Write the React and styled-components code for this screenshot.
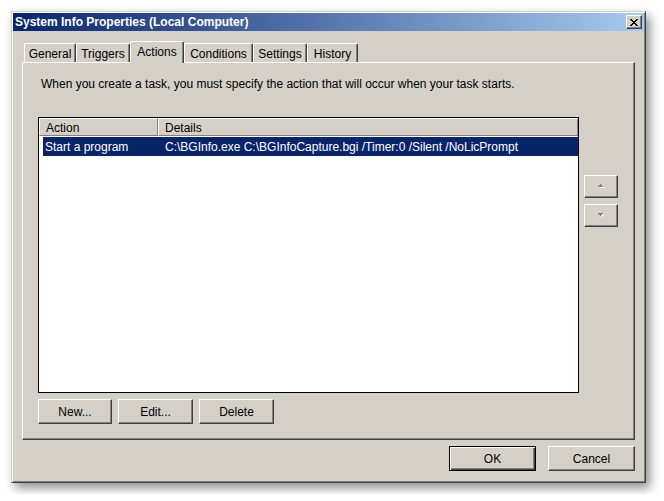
import styled, { createGlobalStyle, css } from "styled-components";

const GlobalStyle = createGlobalStyle`
    html, body {
        margin: 0;
        background: #ffffff;
    }
    body {
        font-family: "Liberation Sans", Arial, sans-serif;
        font-size: 12px;
        color: #000000;
    }
`;

const raised = css`
    border: 1px solid;
    border-color: #ffffff #404040 #404040 #ffffff;
    box-shadow: inset -1px -1px #808080;
`;

const Page = styled.div`
    padding: 11px;
`;

const Window = styled.div`
    width: 635px;
    height: 472px;
    box-sizing: border-box;
    display: flex;
    flex-direction: column;
    padding: 1px;
    background: #d4d0c8;
    border: 1px solid;
    border-color: #d4d0c8 #404040 #404040 #d4d0c8;
    box-shadow: inset 1px 1px #ffffff, inset -1px -1px #808080,
        4px 5px 10px rgba(0, 0, 0, 0.45);
`;

const TitleBar = styled.div`
    height: 18px;
    flex: none;
    display: flex;
    align-items: center;
    justify-content: space-between;
    padding: 0 2px;
    background: linear-gradient(to right, #0a246a, #a6caf0);
    color: #ffffff;
    font-weight: bold;
    font-size: 12px;
`;

const CloseButton = styled.div`
    ${raised};
    width: 16px;
    height: 14px;
    box-sizing: border-box;
    background: #d4d0c8;
    display: flex;
    align-items: center;
    justify-content: center;
`;

const Body = styled.div`
    flex: 1;
    display: flex;
    flex-direction: column;
    padding: 10px 9px 10px 9px;
`;

const TabStrip = styled.div`
    height: 21px;
    flex: none;
    display: flex;
    align-items: flex-start;
    padding-left: 2px;
    position: relative;
    z-index: 1;
`;

const Tab = styled.div`
    box-sizing: border-box;
    width: ${(p) => p.$w}px;
    height: ${(p) => (p.$active ? 22 : 19)}px;
    margin-top: ${(p) => (p.$active ? 0 : 2)}px;
    padding-top: 3px;
    text-align: center;
    background: #d4d0c8;
    border-top: 1px solid #ffffff;
    border-left: 1px solid #ffffff;
    border-right: 1px solid #404040;
    border-top-left-radius: 2px;
    border-top-right-radius: 2px;
    box-shadow: inset -1px 0 #808080;
`;

const Panel = styled.div`
    flex: 1;
    display: flex;
    flex-direction: column;
    ${raised};
    padding: 15px 16px 15px 15px;
`;

const Description = styled.div`
    line-height: 13px;
    margin-left: 3px;
    margin-bottom: 26px;
`;

const MiddleRow = styled.div`
    flex: 1;
    display: flex;
    gap: 5px;
`;

const ListView = styled.div`
    flex: 1;
    background: #ffffff;
    border: 1px solid #000000;
`;

const Header = styled.div`
    display: flex;
    height: 18px;
    background: #d4d0c8;
`;

const HeaderCell = styled.div`
    box-sizing: border-box;
    width: ${(p) => (p.$w ? `${p.$w}px` : "auto")};
    flex: ${(p) => (p.$w ? "none" : 1)};
    padding: 2px 0 0 6px;
    border-top: 1px solid #ffffff;
    border-left: 1px solid #ffffff;
    border-right: 1px solid #808080;
    border-bottom: 1px solid #808080;
`;

const Row = styled.div`
    display: flex;
    height: 19px;
    align-items: center;
    margin: 1px 0 0 4px;
    background: ${(p) => (p.$selected ? "#0a246a" : "transparent")};
    color: ${(p) => (p.$selected ? "#ffffff" : "#000000")};
`;

const Cell = styled.div`
    box-sizing: border-box;
    width: ${(p) => (p.$w ? `${p.$w}px` : "auto")};
    flex: ${(p) => (p.$w ? "none" : 1)};
    padding-left: ${(p) => p.$pad}px;
    white-space: nowrap;
`;

const SideColumn = styled.div`
    width: 34px;
    display: flex;
    flex-direction: column;
    gap: 6px;
    padding-top: 58px;
`;

const ArrowButton = styled.div`
    ${raised};
    box-sizing: border-box;
    height: 23px;
    display: flex;
    align-items: center;
    justify-content: center;
`;

const ButtonRow = styled.div`
    display: flex;
    gap: 6px;
    margin-top: 6px;
    justify-content: ${(p) => (p.$end ? "flex-end" : "flex-start")};
`;

const Footer = styled(ButtonRow)`
    margin-top: 6px;
    gap: 12px;
`;

const Button = styled.div`
    box-sizing: border-box;
    width: ${(p) => p.$w}px;
    height: 25px;
    display: flex;
    align-items: center;
    justify-content: center;
    background: #d4d0c8;
    border: 1px solid;
    border-color: ${(p) =>
        p.$default ? "#000000" : "#ffffff #404040 #404040 #ffffff"};
    box-shadow: ${(p) =>
        p.$default
            ? "inset 1px 1px #ffffff, inset -1px -1px #404040, inset -2px -2px #808080"
            : "inset -1px -1px #808080"};
`;

const CloseGlyph = () => (
    <svg width="8" height="7" viewBox="0 0 8 7" shapeRendering="crispEdges">
        <path
            fill="#000"
            d="M0 0h2v1H0zM6 0h2v1H6zM1 1h2v1H1zM5 1h2v1H5zM2 2h4v1H2zM3 3h2v1H3zM2 4h4v1H2zM1 5h2v1H1zM5 5h2v1H5zM0 6h2v1H0zM6 6h2v1H6z"
        />
    </svg>
);

const Arrow = ({ down }) => (
    <svg width="7" height="5" viewBox="0 0 7 5" shapeRendering="crispEdges">
        {down ? (
            <>
                <path fill="#ffffff" d="M1 1h5v1H1zM2 2h3v1H2zM3 3h1v1H3z" />
                <path fill="#808080" d="M0 0h5v1H0zM1 1h3v1H1zM2 2h1v1H2z" />
            </>
        ) : (
            <>
                <path fill="#ffffff" d="M3 1h1v1H3zM2 2h3v1H2zM1 3h5v1H1z" />
                <path fill="#808080" d="M2 0h1v1H2zM1 1h3v1H1zM0 2h5v1H0z" />
            </>
        )}
    </svg>
);

const tabs = [
    { label: "General", w: 52 },
    { label: "Triggers", w: 54 },
    { label: "Actions", w: 54, active: true },
    { label: "Conditions", w: 69 },
    { label: "Settings", w: 54 },
    { label: "History", w: 51 },
];

const App = () => {
    return (
        <Page>
            <GlobalStyle />
            <Window>
                <TitleBar>
                    <span>System Info Properties (Local Computer)</span>
                    <CloseButton>
                        <CloseGlyph />
                    </CloseButton>
                </TitleBar>
                <Body>
                    <TabStrip>
                        {tabs.map((t) => (
                            <Tab key={t.label} $w={t.w} $active={t.active}>
                                {t.label}
                            </Tab>
                        ))}
                    </TabStrip>
                    <Panel>
                        <Description>
                            When you create a task, you must specify the action that will occur when your task starts.
                        </Description>
                        <MiddleRow>
                            <ListView>
                                <Header>
                                    <HeaderCell $w={119}>Action</HeaderCell>
                                    <HeaderCell>Details</HeaderCell>
                                </Header>
                                <Row $selected>
                                    <Cell $w={115} $pad={2}>Start a program</Cell>
                                    <Cell $pad={7}>
                                        C:\BGInfo.exe C:\BGInfoCapture.bgi /Timer:0 /Silent /NoLicPrompt
                                    </Cell>
                                </Row>
                            </ListView>
                            <SideColumn>
                                <ArrowButton>
                                    <Arrow />
                                </ArrowButton>
                                <ArrowButton>
                                    <Arrow down />
                                </ArrowButton>
                            </SideColumn>
                        </MiddleRow>
                        <ButtonRow>
                            <Button $w={74}>New...</Button>
                            <Button $w={75}>Edit...</Button>
                            <Button $w={75}>Delete</Button>
                        </ButtonRow>
                    </Panel>
                    <Footer $end>
                        <Button $w={87} $default>OK</Button>
                        <Button $w={87}>Cancel</Button>
                    </Footer>
                </Body>
            </Window>
        </Page>
    );
};

export default App;
